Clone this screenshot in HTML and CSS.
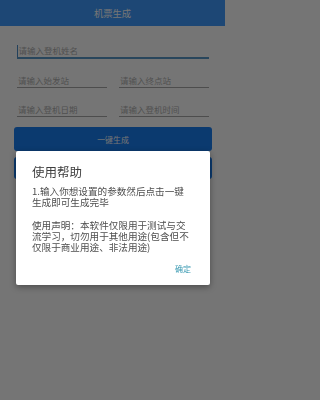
FILE: index.html
```html
<!DOCTYPE html>
<html lang="zh-CN">
<head>
<meta charset="utf-8">
<title>机票生成</title>
<link rel="stylesheet" href="styles.css">
</head>
<body>
<div class="app">
  <header class="toolbar"><span class="toolbar-title">机票生成</span></header>
  <main class="form">
    <div class="field field-focused"><span class="caret"></span><span class="hint">请输入登机姓名</span></div>
    <div class="row">
      <div class="field"><span class="hint">请输入始发站</span></div>
      <div class="field"><span class="hint">请输入终点站</span></div>
    </div>
    <div class="row">
      <div class="field"><span class="hint">请输入登机日期</span></div>
      <div class="field"><span class="hint">请输入登机时间</span></div>
    </div>
    <div class="btn btn-primary">一键生成</div>
    <div class="btn btn-secondary">使用帮助</div>
  </main>
</div>
<div class="scrim"></div>
<div class="dialog">
  <div class="dialog-title">使用帮助</div>
  <div class="dialog-body">
    <p class="para">1.输入你想设置的参数然后点击一键<br>生成即可生成完毕</p>
    <p class="para">使用声明：本软件仅限用于测试与交<br>流学习，切勿用于其他用途(包含但不<br>仅限于商业用途、非法用途)</p>
  </div>
  <div class="dialog-actions"><span class="dialog-btn">确定</span></div>
</div>
</body>
</html>
```

FILE: styles.css
```css
html, body {
  margin: 0;
  padding: 0;
  background: #ffffff;
}
body {
  font-family: "Noto Sans CJK SC", "Noto Sans", Roboto, sans-serif;
  min-height: 400px;
  overflow: hidden;
}
.app {
  width: 225px;
  height: 400px;
  background: #ffffff;
}
.toolbar {
  height: 26px;
  background: #3f9cff;
  display: flex;
  align-items: center;
  justify-content: center;
}
.toolbar-title {
  color: #ffffff;
  font-size: 9.3px;
  line-height: 12px;
}
.form {
  padding: 18px 16px 0 17px;
  display: flex;
  flex-direction: column;
}
.field {
  height: 13px;
  line-height: 13px;
  font-size: 8.5px;
  border-bottom: 1px solid #a9a9a9;
  display: flex;
  align-items: center;
  padding-left: 1px;
}
.field-focused {
  border-bottom: 2px solid #5a98c8;
  padding-left: 0;
}
.caret {
  width: 1px;
  height: 12px;
  background: #4d8fc8;
  margin-right: 0.5px;
}
.hint {
  color: #b0b0b0;
  white-space: nowrap;
}
.row {
  display: grid;
  grid-template-columns: 90px 90px;
  column-gap: 12px;
  margin-top: 15px;
}
.btn {
  margin-left: -3px;
  width: 198px;
  height: 24px;
  border-radius: 3px;
  background: #1a7ef2;
  color: #ffffff;
  font-size: 7.9px;
  display: flex;
  align-items: center;
  justify-content: center;
}
.btn-primary {
  margin-top: 10px;
}
.btn-secondary {
  margin-top: 6px;
  height: 22px;
}
.scrim {
  position: fixed;
  inset: 0;
  background: rgba(0, 0, 0, 0.54);
}
.dialog {
  position: absolute;
  left: 16px;
  top: 151px;
  width: 194px;
  height: 134px;
  box-sizing: border-box;
  background: #ffffff;
  border-radius: 2px;
  box-shadow: 0 2px 6px rgba(0, 0, 0, 0.35);
  padding: 13px 14px 0 16px;
  display: flex;
  flex-direction: column;
}
.dialog-title {
  font-size: 12.5px;
  line-height: 16px;
  color: #3e3e3e;
  white-space: nowrap;
}
.dialog-body {
  margin-top: 6px;
  font-size: 9.6px;
  line-height: 11.3px;
  color: #4e4e4e;
  white-space: nowrap;
  display: flex;
  flex-direction: column;
  gap: 11.3px;
}
.para {
  margin: 0;
}
.dialog-actions {
  margin-top: 10px;
  display: flex;
  justify-content: flex-end;
  padding-right: 5px;
}
.dialog-btn {
  font-size: 8px;
  line-height: 10px;
  color: #3a9ab2;
}
```
